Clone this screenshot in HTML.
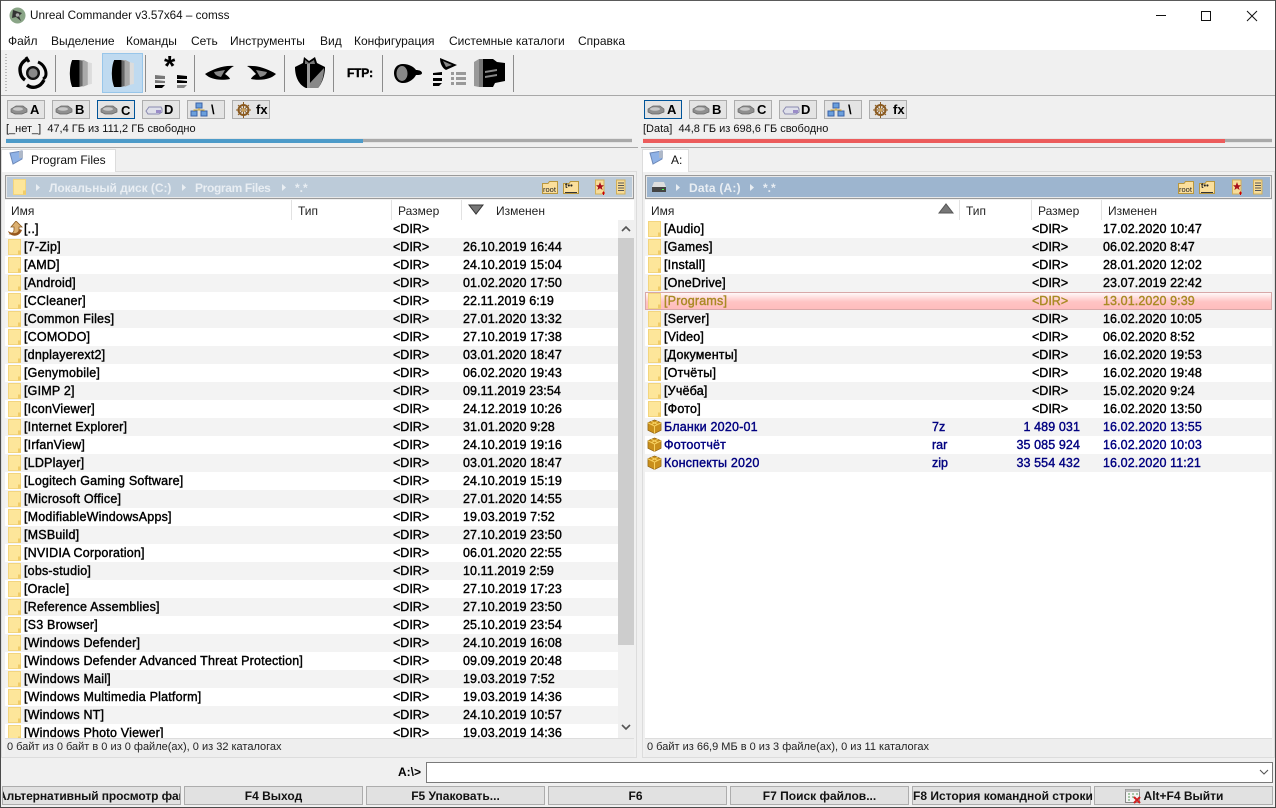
<!DOCTYPE html>
<html><head><meta charset="utf-8"><title>Unreal Commander</title>
<style>
*{box-sizing:border-box}
html,body{margin:0;padding:0}
body{width:1276px;height:808px;overflow:hidden;position:relative;background:#f0f0f0;font-family:"Liberation Sans",sans-serif;font-size:12px;color:#000}
.a{position:absolute;white-space:nowrap}
.lst{position:absolute;top:220px;height:518px;overflow:hidden;background:#fff}
.r{height:18px;position:relative;line-height:18px;font-size:12.5px;-webkit-text-stroke:.4px currentColor}
.r:nth-child(even){background:#f3f3f3}
.r span{position:absolute;top:0;white-space:nowrap}
.r svg{position:absolute;left:3px;top:1px}
.n{left:19px;letter-spacing:.2px}.s{left:388px}.d{left:458px;letter-spacing:.1px}
.rl .s{left:387px}.rl .d{left:458px}.rl .t{left:287px}.rl .z{right:192px;letter-spacing:.1px}
.ar{color:#000080}
.h{top:204px;font-size:12px;color:#222}
.hs{position:absolute;top:200px;width:1px;height:20px;background:#e2e2e2}
.b{position:absolute;top:100px;width:38px;height:19px;background:#e4e4e4;border:1px solid #adadad;font-weight:bold;font-size:13px;line-height:18px;padding-left:22px}
.b.on{background:#e4e4e4;border:1px solid #005499;padding-left:23px;line-height:20px}
.b svg{position:absolute;left:2px;top:3px}
.sep{position:absolute;top:55px;width:1px;height:37px;background:#8c8c8c}
.fk{position:absolute;top:786px;height:19px;width:179px;background:#e1e1e1;border:1px solid #adadad;text-align:center;font-weight:bold;font-size:12px;line-height:19px;overflow:hidden;white-space:nowrap;color:#111}
.mn{position:absolute;top:34px;font-size:12px;color:#111}
.p{position:absolute;top:181px;font-size:12px;font-weight:bold;white-space:nowrap;color:#e9eef3}
.ic{position:absolute;font-size:7.5px;color:#222;white-space:nowrap}
</style></head><body>
<svg width="0" height="0" style="position:absolute"><defs>
<symbol id="f" viewBox="0 0 14 16"><path d="M.5 .5H12.500V15.500H.5Z" fill="#fde69a" stroke="#f3d57e"/><path d="M10 11.500H13V15.500H10Z" fill="#f0cc68"/></symbol>
<symbol id="bx" viewBox="0 0 16 16"><path d="M8 1L15 4V12L8 15.500L1 12V4Z" fill="#c98f1c" stroke="#8a5d10" stroke-width=".7"/><path d="M1 4L8 7.500L15 4M8 7.500V15.500M4.500 2.500L11.500 6M11.500 2.500L4.500 6" fill="none" stroke="#f6d060" stroke-width="1.100"/></symbol>
<symbol id="hd" viewBox="0 0 18 12"><path d="M1 5L6 2H13L17 5V8L12 10H5L1 8Z" fill="#8f8f8f" stroke="#666" stroke-width=".7"/><ellipse cx="8" cy="5" rx="5" ry="1.800" fill="#c8c8c8"/></symbol>
<symbol id="lens" viewBox="0 0 24 28"><path d="M4 1H10L23 4V24L10 27H4C1 20 1 8 4 1Z" fill="#dcdcdc"/><path d="M4 1H15L19 3V25L15 26.500H4C1 20 1 8 4 1Z" fill="#aaa"/><path d="M4 1H11L14 2V26L11 27H4C1 20 1 8 4 1Z" fill="#666"/><path d="M4 1H10L11 1.500V26.500L10 27H4C1 20 1 8 4 1Z" fill="#000"/></symbol>
<symbol id="fold" viewBox="0 0 16 13"><path d="M.5 12.500V2.500H6L7.500 .5H15.500V12.500Z" fill="#fbdf9c" stroke="#b8963e"/></symbol>
<symbol id="scr" viewBox="0 0 11 16"><path d="M1.500 1H10V15H1.500Z" fill="#f7dc98" stroke="#d2b05a"/></symbol>
</defs></svg>

<!-- title -->
<div class="a" style="left:0;top:0;width:1276px;height:50px;background:#fff"></div>
<div class="a" style="left:0;top:0;width:1276px;height:1px;background:#5a5a5a"></div>
<svg class="a" style="left:9px;top:7px" width="17" height="17" viewBox="0 0 17 17"><circle cx="8.500" cy="8.500" r="8" fill="#8aa587"/><path d="M4 3L13 6L10 9L12 14L7 10L3 11Z" fill="#333"/><circle cx="8.500" cy="8" r="1.800" fill="#aaa"/></svg>
<div class="a" style="left:30px;top:9px;font-size:11.700px;color:#111">Unreal Commander v3.57x64 – comss</div>
<svg class="a" style="left:1150px;top:6px" width="126" height="20" viewBox="0 0 126 20"><path d="M6 9.500H16" stroke="#111" fill="none"/><path d="M51.500 5.500H60.500V14.500H51.500Z" stroke="#111" fill="none"/><path d="M97 5L107 15M107 5L97 15" stroke="#111" fill="none"/></svg>
<div class="mn" style="left:8px">Файл</div><div class="mn" style="left:51px">Выделение</div><div class="mn" style="left:126px">Команды</div><div class="mn" style="left:191px">Сеть</div><div class="mn" style="left:230px">Инструменты</div><div class="mn" style="left:320px">Вид</div><div class="mn" style="left:354px">Конфигурация</div><div class="mn" style="left:449px">Системные каталоги</div><div class="mn" style="left:578px">Справка</div>

<!-- toolbar -->
<div class="a" style="left:102px;top:53px;width:41px;height:40px;background:#bfdaf0;border:1px solid #98c6ea"></div>
<div class="sep" style="left:55px"></div><div class="sep" style="left:145px"></div><div class="sep" style="left:194px"></div><div class="sep" style="left:284px"></div><div class="sep" style="left:333px"></div><div class="sep" style="left:382px"></div><div class="sep" style="left:513px"></div>
<div class="a" style="left:5px;top:54px;width:2px;height:38px;background:repeating-linear-gradient(#bbb 0 1px,transparent 1px 3px)"></div>
<div class="a" style="left:0;top:95px;width:1276px;height:1px;background:#a8a8a8"></div>
<div class="a" style="left:0;top:147px;width:1276px;height:1px;background:#a8a8a8"></div>
<svg class="a" style="left:16px;top:54px" width="32" height="38" viewBox="0 0 32 38"><circle cx="17" cy="19" r="5.800" fill="#888" stroke="#111" stroke-width="2.400"/><path d="M11 5C6 8 4 12 4 15C4 20 6 24 9 26" fill="none" stroke="#000" stroke-width="3.400"/><path d="M10 3L13 8" stroke="#000" stroke-width="2.800" fill="none"/><path d="M11 31C16 35 24 34 28 26" fill="none" stroke="#000" stroke-width="3.400"/><path d="M22 8C27 10 30 15 30 20C30 22 29 24 27 25" fill="none" stroke="#000" stroke-width="3"/></svg>
<svg class="a" style="left:68px;top:59px" width="25" height="29"><use href="#lens"/></svg>
<svg class="a" style="left:110px;top:59px" width="25" height="29"><use href="#lens"/></svg>
<svg class="a" style="left:154px;top:54px" width="36" height="38" viewBox="0 0 36 38"><text x="10" y="22" font-family="Liberation Sans" font-weight="bold" font-size="29" fill="#000">*</text><path d="M1 21L11 22V25H1ZM1 26L11 27V29H1Z" fill="#777"/><path d="M1 31H11L8 34H1Z" fill="#000"/><path d="M23 21L33 22V25H23ZM23 26L33 27V29H23Z" fill="#000"/><path d="M23 31H33L30 34H23Z" fill="#888"/></svg>
<svg class="a" style="left:204px;top:63px" width="31" height="22" viewBox="0 0 31 22"><path d="M1 11C9 6 20 2 30 3C26 5 24 8 21 11C24 13 26 15 26 16C15 18 6 16 1 11Z" fill="#000"/><path d="M10 9L21 7L17 14C13 13 11 12 10 9Z" fill="#888"/></svg>
<svg class="a" style="left:246px;top:63px" width="31" height="22" viewBox="0 0 31 22"><path d="M30 11C22 6 11 2 1 3C5 5 7 8 10 11C7 13 5 15 5 16C16 18 25 16 30 11Z" fill="#000"/><path d="M21 9L10 7L14 14C18 13 20 12 21 9Z" fill="#888"/></svg>
<svg class="a" style="left:294px;top:55px" width="32" height="36" viewBox="0 0 32 36"><path d="M1 12L9 8L10 2L15 6L21 2L23 8L31 12C31 22 27 30 24 33H12C5 30 1 22 1 12Z" fill="#000"/><path d="M30 13C30 22 27 30 24 33H15V29Z" fill="#888"/><path d="M13 8H16V33H13Z" fill="#999"/><path d="M11 5L15 8L20 5L21 9H11Z" fill="#777"/></svg>
<div class="a" style="left:347px;top:66px;font-weight:bold;font-size:12px;letter-spacing:-.2px;-webkit-text-stroke:.4px #000">FTP:</div>
<svg class="a" style="left:393px;top:60px" width="30" height="26" viewBox="0 0 30 26"><path d="M10 4C16 4 21 7 23 10C26 10 29 11 29 13C29 15 26 15 23 15C21 19 16 23 10 23C4 23 1 18 1 13C1 8 4 4 10 4Z" fill="#000"/><ellipse cx="9" cy="13.500" rx="5.500" ry="7.500" fill="#888"/></svg>
<svg class="a" style="left:431px;top:57px" width="36" height="34" viewBox="0 0 36 34"><path d="M9 1L26 8L15 13C11 11 9 6 9 1Z" fill="#000"/><path d="M12 4L21 8L15 10Z" fill="#888"/><path d="M2 16L11 15V18H2ZM2 21L11 21V24H2ZM2 26L11 26L8 29H2Z" fill="#000"/><path d="M20 15H23V18H20ZM25 15H35V18H25ZM20 20H23V23H20ZM25 20H35V23H25ZM20 25H23V28H20ZM25 25H35V28H25Z" fill="#999"/></svg>
<svg class="a" style="left:473px;top:57px" width="34" height="32" viewBox="0 0 34 32"><path d="M1 5L6 2V30L1 29Z" fill="#999"/><path d="M6 2H10V30H6Z" fill="#777"/><path d="M10 2H20L24 5L32 6V24L22 26L20 30H10Z" fill="#000"/><path d="M12 14L24 12V14L12 16ZM12 19L24 17V19L12 21Z" fill="#888"/></svg>

<!-- drives left -->
<div class="b" style="left:7px"><svg width="18" height="12"><use href="#hd"/></svg>A</div>
<div class="b" style="left:52px"><svg width="18" height="12"><use href="#hd"/></svg>B</div>
<div class="b on" style="left:97px"><svg width="18" height="12"><use href="#hd"/></svg>C</div>
<div class="b" style="left:142px;padding-left:21px"><svg width="18" height="12" viewBox="0 0 18 12"><path d="M1 7L4 3H16L17 5V8L14 10H3Z" fill="#dfe0ea" stroke="#8a8ab0"/><path d="M11 6H16V9H11Z" fill="#9a8cc8"/></svg>D</div>
<div class="b" style="left:187px;padding-left:23px"><svg width="18" height="16" viewBox="0 0 18 16" style="top:1px"><path d="M6 1H12V6H6ZM1 9H7V14H1ZM11 9H17V14H11Z" fill="#6a9fdc" stroke="#3a62a8"/><path d="M9 6V8M4 9V8H14V9" stroke="#caa53a" fill="none"/></svg>\</div>
<div class="b" style="left:232px;padding-left:23px"><svg width="17" height="16" viewBox="0 0 17 16" style="top:1px"><circle cx="8.500" cy="8" r="5" fill="none" stroke="#8a5a20" stroke-width="2"/><path d="M8.500 0V16M1 8H16M3 3L14 13M14 3L3 13" stroke="#8a5a20"/><circle cx="8.500" cy="8" r="1.800" fill="#c9a05a"/></svg>fx</div>
<!-- drives right -->
<div class="b on" style="left:644px;padding-left:22px;line-height:18px"><svg width="18" height="12"><use href="#hd"/></svg>A</div>
<div class="b" style="left:689px"><svg width="18" height="12"><use href="#hd"/></svg>B</div>
<div class="b" style="left:734px"><svg width="18" height="12"><use href="#hd"/></svg>C</div>
<div class="b" style="left:779px;padding-left:21px"><svg width="18" height="12" viewBox="0 0 18 12"><path d="M1 7L4 3H16L17 5V8L14 10H3Z" fill="#dfe0ea" stroke="#8a8ab0"/><path d="M11 6H16V9H11Z" fill="#9a8cc8"/></svg>D</div>
<div class="b" style="left:824px;padding-left:23px"><svg width="18" height="16" viewBox="0 0 18 16" style="top:1px"><path d="M6 1H12V6H6ZM1 9H7V14H1ZM11 9H17V14H11Z" fill="#6a9fdc" stroke="#3a62a8"/><path d="M9 6V8M4 9V8H14V9" stroke="#caa53a" fill="none"/></svg>\</div>
<div class="b" style="left:869px;padding-left:23px"><svg width="17" height="16" viewBox="0 0 17 16" style="top:1px"><circle cx="8.500" cy="8" r="5" fill="none" stroke="#8a5a20" stroke-width="2"/><path d="M8.500 0V16M1 8H16M3 3L14 13M14 3L3 13" stroke="#8a5a20"/><circle cx="8.500" cy="8" r="1.800" fill="#c9a05a"/></svg>fx</div>

<div class="a" style="left:6px;top:123px;font-size:11px;color:#111">[_нет_] &nbsp;47,4 ГБ из 111,2 ГБ свободно</div>
<div class="a" style="left:643px;top:123px;font-size:11px;color:#111">[Data] &nbsp;44,8 ГБ из 698,6 ГБ свободно</div>
<div class="a" style="left:6px;top:138px;width:626px;height:5px;background:#a9a9a9;border:1px solid #e4e4e4;border-width:1px 0"></div>
<div class="a" style="left:6px;top:139px;width:357px;height:4px;background:#4d9bc9"></div>
<div class="a" style="left:643px;top:138px;width:629px;height:5px;background:#a9a9a9;border:1px solid #e4e4e4;border-width:1px 0"></div>
<div class="a" style="left:643px;top:139px;width:582px;height:4px;background:#ec5c5c"></div>
<div class="a" style="left:638px;top:147px;width:3px;height:611px;background:#f0f0f0"></div>

<!-- tabs left -->
<div class="a" style="left:1px;top:171px;width:636px;height:587px;background:#f0f0f0;border:1px solid #dcdcdc"></div>
<div class="a" style="left:1px;top:149px;width:115px;height:23px;background:#fff;border:1px solid #dcdcdc;border-bottom:0"></div>
<svg class="a" style="left:9px;top:150px" width="16" height="16" viewBox="0 0 16 16"><path d="M1 3L13 1V9L4 14Z" fill="#8fb2e6" stroke="#6c88b8"/><path d="M10 1H14V8H10Z" fill="#aeb8c8"/></svg>
<div class="a" style="left:31px;top:153px;color:#111">Program Files</div>
<!-- tabs right -->
<div class="a" style="left:642px;top:171px;width:633px;height:587px;background:#f0f0f0;border:1px solid #dcdcdc"></div>
<div class="a" style="left:642px;top:149px;width:47px;height:23px;background:#fff;border:1px solid #dcdcdc;border-bottom:0"></div>
<svg class="a" style="left:649px;top:150px" width="16" height="16" viewBox="0 0 16 16"><path d="M1 3L13 1V9L4 14Z" fill="#8fb2e6" stroke="#6c88b8"/><path d="M10 1H14V8H10Z" fill="#aeb8c8"/></svg>
<div class="a" style="left:671px;top:153px;color:#111">A:</div>

<!-- path left -->
<div class="a" style="left:5px;top:175px;width:629px;height:24px;background:#bccbd9;border:1px solid #9a9a9a;box-shadow:inset 0 0 0 1px #e8e8e8"></div>
<svg class="a" style="left:13px;top:179px" width="14" height="16"><use href="#f"/></svg>
<svg class="a" style="left:35px;top:183px" width="6" height="9"><path d="M1 1L5 4.500L1 8Z" fill="#e9eef3"/></svg>
<div class="p" style="left:49px;letter-spacing:-.05px">Локальный диск (C:)</div>
<svg class="a" style="left:181px;top:183px" width="6" height="9"><path d="M1 1L5 4.500L1 8Z" fill="#e9eef3"/></svg>
<div class="p" style="left:195px;letter-spacing:-.35px">Program Files</div>
<svg class="a" style="left:281px;top:183px" width="6" height="9"><path d="M1 1L5 4.500L1 8Z" fill="#e9eef3"/></svg>
<div class="p" style="left:295px">*.*</div>
<svg class="a" style="left:542px;top:181px" width="16" height="13"><use href="#fold"/></svg><svg class="a" style="left:563px;top:181px" width="16" height="13"><use href="#fold"/><path d="M2 11.500H14" stroke="#333"/></svg>
<div class="ic" style="left:543px;top:185px">root</div><div class="ic" style="left:565px;top:181px;font-weight:bold">t••</div>
<svg class="a" style="left:594px;top:179px" width="11" height="16"><use href="#scr"/><path d="M6 3L7.200 6.200H10L7.800 8.200L8.600 11L6 9.300L3.400 11L4.200 8.200L2 6.200H4.800Z" fill="#a80f1c"/><path d="M8 14H11M9.500 12.500V16" stroke="#c00"/></svg>
<svg class="a" style="left:615px;top:179px" width="11" height="16"><use href="#scr"/><path d="M3 4H9M3 6.500H9M3 9H9M3 11.500H9" stroke="#555"/></svg>
<!-- path right -->
<div class="a" style="left:645px;top:175px;width:627px;height:24px;background:#9db5cf;border:1px solid #9a9a9a;box-shadow:inset 0 0 0 1px #e8e8e8"></div>
<svg class="a" style="left:651px;top:181px" width="16" height="12" viewBox="0 0 16 12"><path d="M3 1H13L15 6V11H1V6Z" fill="#dedede"/><path d="M1 6H15V11H1Z" fill="#444"/><path d="M11 8H13V9H11Z" fill="#4f4"/></svg>
<svg class="a" style="left:675px;top:183px" width="6" height="9"><path d="M1 1L5 4.500L1 8Z" fill="#e9eef3"/></svg>
<div class="p" style="left:689px;letter-spacing:.2px">Data (A:)</div>
<svg class="a" style="left:749px;top:183px" width="6" height="9"><path d="M1 1L5 4.500L1 8Z" fill="#e9eef3"/></svg>
<div class="p" style="left:763px">*.*</div>
<svg class="a" style="left:1178px;top:181px" width="16" height="13"><use href="#fold"/></svg><svg class="a" style="left:1199px;top:181px" width="16" height="13"><use href="#fold"/><path d="M2 11.500H14" stroke="#333"/></svg>
<div class="ic" style="left:1179px;top:185px">root</div><div class="ic" style="left:1201px;top:181px;font-weight:bold">t••</div>
<svg class="a" style="left:1231px;top:179px" width="11" height="16"><use href="#scr"/><path d="M6 3L7.200 6.200H10L7.800 8.200L8.600 11L6 9.300L3.400 11L4.200 8.200L2 6.200H4.800Z" fill="#a80f1c"/><path d="M8 14H11M9.500 12.500V16" stroke="#c00"/></svg>
<svg class="a" style="left:1252px;top:179px" width="11" height="16"><use href="#scr"/><path d="M3 4H9M3 6.500H9M3 9H9M3 11.500H9" stroke="#555"/></svg>

<!-- headers -->
<div class="a" style="left:5px;top:200px;width:629px;height:20px;background:#fff"></div>
<div class="a" style="left:645px;top:200px;width:627px;height:20px;background:#fff"></div>
<div class="hs" style="left:291px"></div><div class="hs" style="left:391px"></div><div class="hs" style="left:461px"></div>
<div class="hs" style="left:959px"></div><div class="hs" style="left:1031px"></div><div class="hs" style="left:1101px"></div>
<div class="a h" style="left:11px">Имя</div><div class="a h" style="left:298px">Тип</div><div class="a h" style="left:398px">Размер</div><div class="a h" style="left:496px">Изменен</div>
<svg class="a" style="left:468px;top:204px" width="16" height="11"><path d="M1 1H15L8 10Z" fill="#777" stroke="#333"/></svg>
<div class="a h" style="left:651px">Имя</div><div class="a h" style="left:966px">Тип</div><div class="a h" style="left:1038px">Размер</div><div class="a h" style="left:1108px">Изменен</div>
<svg class="a" style="left:938px;top:203px" width="16" height="11"><path d="M1 10H15L8 1Z" fill="#777" stroke="#555"/></svg>

<!-- left list -->
<div class="lst" style="left:5px;width:613px">
<div class="r"><svg width="16" height="16" viewBox="0 0 16 16" style="left:2px"><path d="M9 0L15 6H12V9C12 13 8 14 3 13C6 12 7 11 7 9V6H4Z" fill="#dcb070" stroke="#8a5a20" stroke-width=".8"/><path d="M1 10C3 16 12 17 15 9L12 8C12 12 7 14 1 10Z" fill="#96561c"/></svg><span class="n">[..]</span><span class="s">&lt;DIR&gt;</span></div>
<div class="r"><svg width="14" height="16"><use href="#f"/></svg><span class="n">[7-Zip]</span><span class="s">&lt;DIR&gt;</span><span class="d">26.10.2019 16:44</span></div>
<div class="r"><svg width="14" height="16"><use href="#f"/></svg><span class="n">[AMD]</span><span class="s">&lt;DIR&gt;</span><span class="d">24.10.2019 15:04</span></div>
<div class="r"><svg width="14" height="16"><use href="#f"/></svg><span class="n">[Android]</span><span class="s">&lt;DIR&gt;</span><span class="d">01.02.2020 17:50</span></div>
<div class="r"><svg width="14" height="16"><use href="#f"/></svg><span class="n">[CCleaner]</span><span class="s">&lt;DIR&gt;</span><span class="d">22.11.2019 6:19</span></div>
<div class="r"><svg width="14" height="16"><use href="#f"/></svg><span class="n">[Common Files]</span><span class="s">&lt;DIR&gt;</span><span class="d">27.01.2020 13:32</span></div>
<div class="r"><svg width="14" height="16"><use href="#f"/></svg><span class="n">[COMODO]</span><span class="s">&lt;DIR&gt;</span><span class="d">27.10.2019 17:38</span></div>
<div class="r"><svg width="14" height="16"><use href="#f"/></svg><span class="n">[dnplayerext2]</span><span class="s">&lt;DIR&gt;</span><span class="d">03.01.2020 18:47</span></div>
<div class="r"><svg width="14" height="16"><use href="#f"/></svg><span class="n">[Genymobile]</span><span class="s">&lt;DIR&gt;</span><span class="d">06.02.2020 19:43</span></div>
<div class="r"><svg width="14" height="16"><use href="#f"/></svg><span class="n">[GIMP 2]</span><span class="s">&lt;DIR&gt;</span><span class="d">09.11.2019 23:54</span></div>
<div class="r"><svg width="14" height="16"><use href="#f"/></svg><span class="n">[IconViewer]</span><span class="s">&lt;DIR&gt;</span><span class="d">24.12.2019 10:26</span></div>
<div class="r"><svg width="14" height="16"><use href="#f"/></svg><span class="n">[Internet Explorer]</span><span class="s">&lt;DIR&gt;</span><span class="d">31.01.2020 9:28</span></div>
<div class="r"><svg width="14" height="16"><use href="#f"/></svg><span class="n">[IrfanView]</span><span class="s">&lt;DIR&gt;</span><span class="d">24.10.2019 19:16</span></div>
<div class="r"><svg width="14" height="16"><use href="#f"/></svg><span class="n">[LDPlayer]</span><span class="s">&lt;DIR&gt;</span><span class="d">03.01.2020 18:47</span></div>
<div class="r"><svg width="14" height="16"><use href="#f"/></svg><span class="n">[Logitech Gaming Software]</span><span class="s">&lt;DIR&gt;</span><span class="d">24.10.2019 15:19</span></div>
<div class="r"><svg width="14" height="16"><use href="#f"/></svg><span class="n">[Microsoft Office]</span><span class="s">&lt;DIR&gt;</span><span class="d">27.01.2020 14:55</span></div>
<div class="r"><svg width="14" height="16"><use href="#f"/></svg><span class="n">[ModifiableWindowsApps]</span><span class="s">&lt;DIR&gt;</span><span class="d">19.03.2019 7:52</span></div>
<div class="r"><svg width="14" height="16"><use href="#f"/></svg><span class="n">[MSBuild]</span><span class="s">&lt;DIR&gt;</span><span class="d">27.10.2019 23:50</span></div>
<div class="r"><svg width="14" height="16"><use href="#f"/></svg><span class="n">[NVIDIA Corporation]</span><span class="s">&lt;DIR&gt;</span><span class="d">06.01.2020 22:55</span></div>
<div class="r"><svg width="14" height="16"><use href="#f"/></svg><span class="n">[obs-studio]</span><span class="s">&lt;DIR&gt;</span><span class="d">10.11.2019 2:59</span></div>
<div class="r"><svg width="14" height="16"><use href="#f"/></svg><span class="n">[Oracle]</span><span class="s">&lt;DIR&gt;</span><span class="d">27.10.2019 17:23</span></div>
<div class="r"><svg width="14" height="16"><use href="#f"/></svg><span class="n">[Reference Assemblies]</span><span class="s">&lt;DIR&gt;</span><span class="d">27.10.2019 23:50</span></div>
<div class="r"><svg width="14" height="16"><use href="#f"/></svg><span class="n">[S3 Browser]</span><span class="s">&lt;DIR&gt;</span><span class="d">25.10.2019 23:54</span></div>
<div class="r"><svg width="14" height="16"><use href="#f"/></svg><span class="n">[Windows Defender]</span><span class="s">&lt;DIR&gt;</span><span class="d">24.10.2019 16:08</span></div>
<div class="r"><svg width="14" height="16"><use href="#f"/></svg><span class="n">[Windows Defender Advanced Threat Protection]</span><span class="s">&lt;DIR&gt;</span><span class="d">09.09.2019 20:48</span></div>
<div class="r"><svg width="14" height="16"><use href="#f"/></svg><span class="n">[Windows Mail]</span><span class="s">&lt;DIR&gt;</span><span class="d">19.03.2019 7:52</span></div>
<div class="r"><svg width="14" height="16"><use href="#f"/></svg><span class="n">[Windows Multimedia Platform]</span><span class="s">&lt;DIR&gt;</span><span class="d">19.03.2019 14:36</span></div>
<div class="r"><svg width="14" height="16"><use href="#f"/></svg><span class="n">[Windows NT]</span><span class="s">&lt;DIR&gt;</span><span class="d">24.10.2019 10:57</span></div>
<div class="r"><svg width="14" height="16"><use href="#f"/></svg><span class="n">[Windows Photo Viewer]</span><span class="s">&lt;DIR&gt;</span><span class="d">19.03.2019 14:36</span></div>
</div>
<!-- scrollbar -->
<div class="a" style="left:618px;top:220px;width:16px;height:518px;background:#f0f0f0"></div>
<div class="a" style="left:618px;top:238px;width:16px;height:407px;background:#cdcdcd"></div>
<svg class="a" style="left:618px;top:223px" width="16" height="12"><path d="M4 8L8 4L12 8" fill="none" stroke="#555" stroke-width="1.600"/></svg>
<svg class="a" style="left:618px;top:721px" width="16" height="12"><path d="M4 4L8 8L12 4" fill="none" stroke="#555" stroke-width="1.600"/></svg>

<!-- right list -->
<div class="lst rl" style="left:645px;width:627px">
<div class="r"><svg width="14" height="16"><use href="#f"/></svg><span class="n">[Audio]</span><span class="s">&lt;DIR&gt;</span><span class="d">17.02.2020 10:47</span></div>
<div class="r"><svg width="14" height="16"><use href="#f"/></svg><span class="n">[Games]</span><span class="s">&lt;DIR&gt;</span><span class="d">06.02.2020 8:47</span></div>
<div class="r"><svg width="14" height="16"><use href="#f"/></svg><span class="n">[Install]</span><span class="s">&lt;DIR&gt;</span><span class="d">28.01.2020 12:02</span></div>
<div class="r"><svg width="14" height="16"><use href="#f"/></svg><span class="n">[OneDrive]</span><span class="s">&lt;DIR&gt;</span><span class="d">23.07.2019 22:42</span></div>
<div class="r" style="background:linear-gradient(#fff,#ffc4c4 55%,#ffbcbc);box-shadow:inset 0 0 0 1px #d8a8a8;color:#a98a24"><svg width="14" height="16"><use href="#f"/></svg><span class="n">[Programs]</span><span class="s">&lt;DIR&gt;</span><span class="d">13.01.2020 9:39</span></div>
<div class="r"><svg width="14" height="16"><use href="#f"/></svg><span class="n">[Server]</span><span class="s">&lt;DIR&gt;</span><span class="d">16.02.2020 10:05</span></div>
<div class="r"><svg width="14" height="16"><use href="#f"/></svg><span class="n">[Video]</span><span class="s">&lt;DIR&gt;</span><span class="d">06.02.2020 8:52</span></div>
<div class="r"><svg width="14" height="16"><use href="#f"/></svg><span class="n">[Документы]</span><span class="s">&lt;DIR&gt;</span><span class="d">16.02.2020 19:53</span></div>
<div class="r"><svg width="14" height="16"><use href="#f"/></svg><span class="n">[Отчёты]</span><span class="s">&lt;DIR&gt;</span><span class="d">16.02.2020 19:48</span></div>
<div class="r"><svg width="14" height="16"><use href="#f"/></svg><span class="n">[Учёба]</span><span class="s">&lt;DIR&gt;</span><span class="d">15.02.2020 9:24</span></div>
<div class="r"><svg width="14" height="16"><use href="#f"/></svg><span class="n">[Фото]</span><span class="s">&lt;DIR&gt;</span><span class="d">16.02.2020 13:50</span></div>
<div class="r ar"><svg width="15" height="15" style="left:2px"><use href="#bx"/></svg><span class="n">Бланки 2020-01</span><span class="t">7z</span><span class="z">1 489 031</span><span class="d">16.02.2020 13:55</span></div>
<div class="r ar"><svg width="15" height="15" style="left:2px"><use href="#bx"/></svg><span class="n">Фотоотчёт</span><span class="t">rar</span><span class="z">35 085 924</span><span class="d">16.02.2020 10:03</span></div>
<div class="r ar"><svg width="15" height="15" style="left:2px"><use href="#bx"/></svg><span class="n">Конспекты 2020</span><span class="t">zip</span><span class="z">33 554 432</span><span class="d">16.02.2020 11:21</span></div>
</div>

<!-- status -->
<div class="a" style="left:5px;top:738px;width:629px;height:19px;background:#eee;border-top:1px solid #ddd"></div>
<div class="a" style="left:645px;top:738px;width:627px;height:19px;background:#eee;border-top:1px solid #ddd"></div>
<div class="a" style="left:7px;top:741px;font-size:11px;color:#222">0 байт из 0 байт в 0 из 0 файле(ах), 0 из 32 каталогах</div>
<div class="a" style="left:647px;top:741px;font-size:11px;color:#222">0 байт из 66,9 МБ в 0 из 3 файле(ах), 0 из 11 каталогах</div>

<!-- command -->
<div class="a" style="left:398px;top:765px;font-weight:bold;font-size:12px">A:\&gt;</div>
<div class="a" style="left:426px;top:762px;width:847px;height:21px;background:#fff;border:1px solid #7a7a7a"></div>
<svg class="a" style="left:1258px;top:768px" width="12" height="9"><path d="M2 2L6 6L10 2" fill="none" stroke="#555" stroke-width="1.100"/></svg>

<!-- function keys -->
<div class="fk" style="left:2px;text-align:left;text-indent:-5px;letter-spacing:-.1px">Альтернативный просмотр файлов</div>
<div class="fk" style="left:184px">F4 Выход</div>
<div class="fk" style="left:366px">F5 Упаковать...</div>
<div class="fk" style="left:548px;padding-right:4px">F6</div>
<div class="fk" style="left:730px">F7 Поиск файлов...</div>
<div class="fk" style="left:912px;overflow:visible">F8 История командной строки</div>
<div class="fk" style="left:1094px">Alt+F4 Выйти</div>
<svg class="a" style="left:1125px;top:788px" width="16" height="16" viewBox="0 0 16 16"><path d="M.5 1.500H14.500V14.500H.5Z" fill="#f4f4f4" stroke="#888"/><path d="M.5 1.500H14.500V4H.5Z" fill="#bbb"/><path d="M3 6H5M7 6H9M11 6H13M3 9H5M7 9H9M3 12H5" stroke="#5a9a5a"/><path d="M9 9L15 15M15 9L9 15" stroke="#d02020" stroke-width="2"/></svg>

<!-- window border -->
<div class="a" style="left:0;top:0;width:1px;height:808px;background:#4a4a4a"></div>
<div class="a" style="left:1275px;top:0;width:1px;height:808px;background:#4a4a4a"></div>
<div class="a" style="left:0;top:807px;width:1276px;height:1px;background:#4a4a4a"></div>
</body></html>
